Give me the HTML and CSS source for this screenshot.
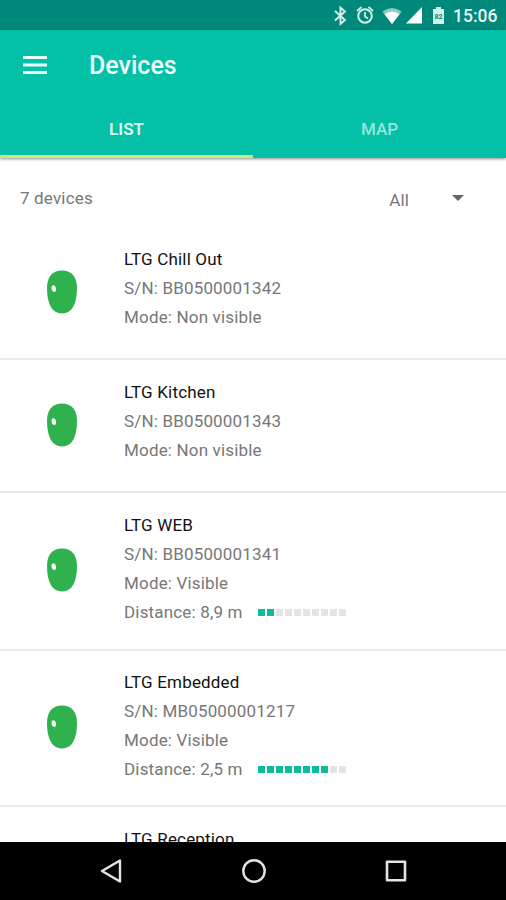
FILE: index.html
```html
<!DOCTYPE html>
<html lang="en">
<head>
    <meta charset="UTF-8">
    <meta name="viewport" content="width=device-width, initial-scale=1.0">
    <title>Devices</title>
    <link rel="stylesheet" href="styles.css">
</head>
<body>
    <div class="screen">
        <div class="status-bar">
            <svg class="status-icons" width="126" height="30" viewBox="0 0 126 30">
                <!-- bluetooth -->
                <path d="M5 11l10 9-4.500 4V7.500l4.500 4-10 9" fill="none" stroke="#d5efeb" stroke-width="1.900"/>
                <!-- alarm -->
                <circle cx="35" cy="16" r="6.800" fill="none" stroke="#d5efeb" stroke-width="2"/>
                <path d="M27 11l4.500-4M43 11l-4.500-4M35 12v4.500l3 2" fill="none" stroke="#d5efeb" stroke-width="1.700"/>
                <!-- wifi -->
                <path d="M52.500 11.500Q62 4.500 71.500 11.500L62 24z" fill="#8bcbc2"/>
                <path d="M54.500 14.200Q62 9 69.500 14.200L62 24z" fill="#fff"/>
                <!-- signal -->
                <path d="M76 23.500L92 7v16.500z" fill="#fff"/>
                <!-- battery -->
                <path d="M103 9h3V7h5v2h3v15h-11z" fill="#d5efeb"/>
                <text class="battery-level" x="108.500" y="18.500" text-anchor="middle">82</text>
            </svg>
            <span class="clock">15:06</span>
        </div>

        <header class="app-bar">
            <div class="toolbar">
                <svg class="menu-icon" width="24" height="18" viewBox="0 0 24 18">
                    <path d="M0 1.500h24M0 9h24M0 16.500h24" stroke="#e9fffa" stroke-width="2.800"/>
                </svg>
                <h1>Devices</h1>
            </div>
            <nav class="tabs">
                <div class="tab active"><span>LIST</span></div>
                <div class="tab"><span>MAP</span></div>
            </nav>
        </header>

        <main>
            <div class="filter">
                <span class="count">7 devices</span>
                <div class="select">
                    <span>All</span>
                    <svg width="12" height="6" viewBox="0 0 12 6"><path d="M0 0h12L6 6z" fill="#656565"/></svg>
                </div>
            </div>

            <div class="device">
                <svg class="beacon" width="32" height="44" viewBox="0 0 32 44">
                    <path d="M16 0.500C26 0.500 31 7 31 18C31 34 26 43.500 16 43.500S1 34 1 18C1 7 6 0.500 16 0.500z" fill="#2fb24e"/>
                    <ellipse cx="7.800" cy="18.700" rx="2.200" ry="3.400" fill="#fff" transform="rotate(-12 7.800 18.700)"/>
                </svg>
                <div class="info">
                    <p class="name">LTG Chill Out</p>
                    <p class="serial">S/N: BB0500001342</p>
                    <p>Mode: Non visible</p>
                </div>
            </div>

            <div class="device">
                <svg class="beacon" width="32" height="44" viewBox="0 0 32 44">
                    <path d="M16 0.500C26 0.500 31 7 31 18C31 34 26 43.500 16 43.500S1 34 1 18C1 7 6 0.500 16 0.500z" fill="#2fb24e"/>
                    <ellipse cx="7.800" cy="18.700" rx="2.200" ry="3.400" fill="#fff" transform="rotate(-12 7.800 18.700)"/>
                </svg>
                <div class="info">
                    <p class="name">LTG Kitchen</p>
                    <p class="serial">S/N: BB0500001343</p>
                    <p>Mode: Non visible</p>
                </div>
            </div>

            <div class="device near">
                <svg class="beacon" width="32" height="44" viewBox="0 0 32 44">
                    <path d="M16 0.500C26 0.500 31 7 31 18C31 34 26 43.500 16 43.500S1 34 1 18C1 7 6 0.500 16 0.500z" fill="#2fb24e"/>
                    <ellipse cx="7.800" cy="18.700" rx="2.200" ry="3.400" fill="#fff" transform="rotate(-12 7.800 18.700)"/>
                </svg>
                <div class="info">
                    <p class="name">LTG WEB</p>
                    <p class="serial">S/N: BB0500001341</p>
                    <p>Mode: Visible</p>
                    <div class="distance">
                        <p>Distance: 8,9 m</p>
                        <div class="meter">
                            <i class="on"></i><i class="on"></i><i></i><i></i><i></i><i></i><i></i><i></i><i></i><i></i>
                        </div>
                    </div>
                </div>
            </div>

            <div class="device near last-near">
                <svg class="beacon" width="32" height="44" viewBox="0 0 32 44">
                    <path d="M16 0.500C26 0.500 31 7 31 18C31 34 26 43.500 16 43.500S1 34 1 18C1 7 6 0.500 16 0.500z" fill="#2fb24e"/>
                    <ellipse cx="7.800" cy="18.700" rx="2.200" ry="3.400" fill="#fff" transform="rotate(-12 7.800 18.700)"/>
                </svg>
                <div class="info">
                    <p class="name">LTG Embedded</p>
                    <p class="serial">S/N: MB05000001217</p>
                    <p>Mode: Visible</p>
                    <div class="distance">
                        <p>Distance: 2,5 m</p>
                        <div class="meter">
                            <i class="on"></i><i class="on"></i><i class="on"></i><i class="on"></i><i class="on"></i><i class="on"></i><i class="on"></i><i class="on"></i><i></i><i></i>
                        </div>
                    </div>
                </div>
            </div>

            <div class="device partial">
                <div class="info">
                    <p class="name">LTG Reception</p>
                </div>
            </div>
        </main>

        <footer class="nav-bar">
            <svg width="22" height="24" viewBox="0 0 22 24"><path d="M2 12L20 1.500v21z" fill="none" stroke="#e4e4e4" stroke-width="2.400" stroke-linejoin="round"/></svg>
            <svg width="24" height="24" viewBox="0 0 24 24"><circle cx="12" cy="12" r="10.700" fill="none" stroke="#e4e4e4" stroke-width="2.400"/></svg>
            <svg width="22" height="24" viewBox="0 0 22 24"><path d="M2 2.800h18v18.400H2z" fill="none" stroke="#e4e4e4" stroke-width="2.600" stroke-linejoin="round"/></svg>
        </footer>
    </div>
</body>
</html>
```

FILE: styles.css
```css
* {
    box-sizing: border-box;
}

body {
    margin: 0;
    background-color: #fff;
    font-family: Roboto, sans-serif;
    color: #777;
}

h1,
p {
    margin: 0;
}

svg {
    display: block;
    flex: none;
}

.screen {
    width: 506px;
    height: 900px;
    display: flex;
    flex-direction: column;
    overflow: hidden;
}

/* Status bar */
.status-bar {
    flex: none;
    height: 30px;
    display: flex;
    justify-content: flex-end;
    align-items: center;
    padding-right: 9px;
    background-color: #00897a;
    color: #e9f8f5;
}

.status-icons {
    margin-right: -5px;
}

.battery-level {
    font-size: 7px;
    font-weight: bold;
    fill: #00897a;
}

.clock {
    width: 44px;
    margin-top: 2px;
    margin-left: 2px;
    font-size: 17.5px;
    font-weight: 500;
    white-space: nowrap;
}

/* App bar */
.app-bar {
    flex: none;
    height: 128px;
    background-color: #04c0a7;
    box-shadow: 0 1px 3px rgba(0, 0, 0, 0.45);
    z-index: 1;
}

.toolbar {
    display: flex;
    align-items: center;
    height: 70px;
    padding-left: 23px;
}

.toolbar h1 {
    margin-top: 2px;
    margin-left: 42px;
    font-size: 25px;
    font-weight: 500;
    line-height: 30px;
    color: #effffc;
}

.menu-icon {
    margin-top: -1px;
}

.tabs {
    display: flex;
    height: 58px;
}

.tab {
    flex: 1;
    text-align: center;
    line-height: 58px;
    font-size: 17px;
    font-weight: 500;
    color: #98e6dc;
}

.tab.active {
    font-weight: 600;
    color: #dcfbf5;
    border-bottom: 3px solid #c6ea7f;
}

/* Device list */
main {
    flex: 1;
    min-height: 0;
    overflow: hidden;
    font-size: 17px;
    line-height: 29px;
    letter-spacing: 0.17px;
}

.filter {
    display: flex;
    justify-content: space-between;
    align-items: center;
    height: 69px;
    padding: 11px 42px 0 20px;
}

.select {
    display: flex;
    align-items: center;
    gap: 43px;
    padding-top: 5px;
}

.select svg {
    margin-top: -6px;
}

.device {
    display: flex;
    align-items: center;
    height: 133px;
    padding: 18px 0 26px 46px;
    border-bottom: 2px solid #eaeaea;
}

.device.near {
    height: 158px;
    padding-bottom: 22px;
}

.device.last-near {
    height: 156px;
    padding-top: 17px;
    padding-bottom: 21px;
}

.device.partial {
    align-items: flex-start;
    padding-left: 124px;
}

.beacon {
    margin-top: 7px;
    margin-right: 46px;
}

.near .beacon {
    margin-top: 2px;
}

.name {
    color: #111;
}

.distance {
    display: flex;
    align-items: center;
}

.meter {
    display: flex;
    gap: 2px;
    margin-left: 15px;
}

.meter i {
    width: 7px;
    height: 7px;
    background-color: #e4e4e4;
}

.meter .on {
    background-color: #0bbd9c;
}

/* Navigation bar */
.nav-bar {
    flex: none;
    height: 58px;
    display: flex;
    justify-content: space-between;
    align-items: center;
    padding: 0 99px 0 100px;
    background-color: #000;
}
```
